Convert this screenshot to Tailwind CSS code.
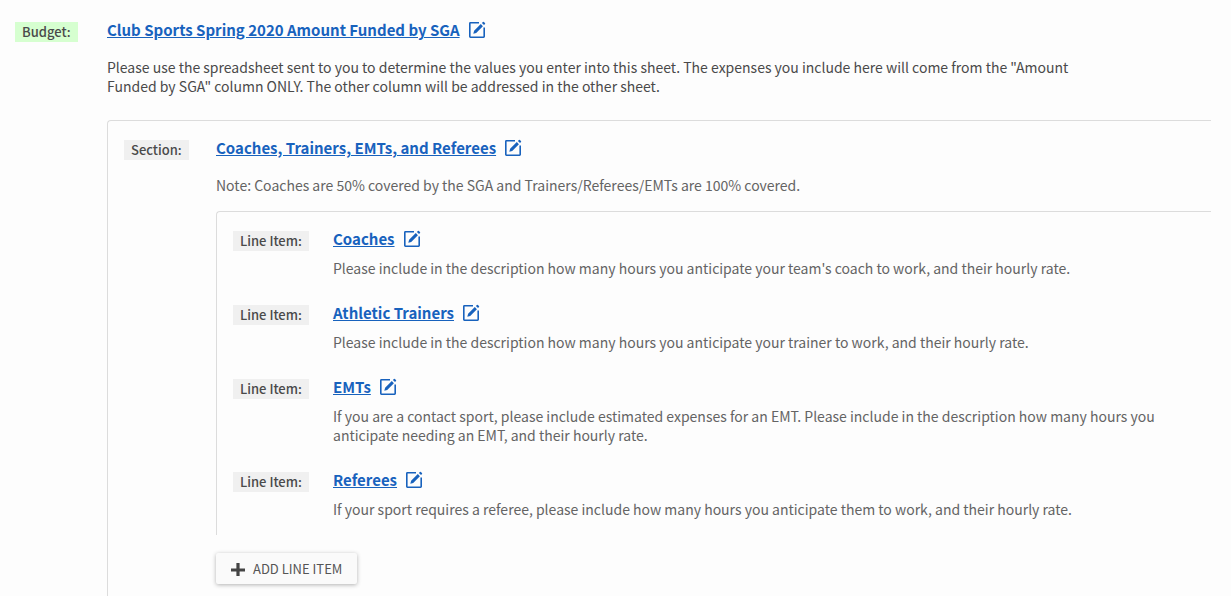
<!DOCTYPE html>
<html lang="en">
<head>
  <meta charset="UTF-8" />
  <meta name="viewport" content="width=device-width, initial-scale=1" />
  <title>Budget</title>
  <script src="https://cdn.jsdelivr.net/npm/@tailwindcss/browser@4"></script>
</head>
<body class="bg-[#fdfdfd] font-['Noto_Sans_CJK_SC','Noto_Sans',sans-serif] text-[14px] leading-[19px] text-[#4a4a4a]">
  <svg class="hidden">
    <symbol id="edit" viewBox="0 0 18 18">
      <path d="M11 1.800H2.400Q1.800 1.800 1.800 2.400v13.200q0 .6.6.6h13.200q.6 0 .6-.6V6.500" fill="none" stroke="currentColor" stroke-width="1.600" />
      <path d="M12.800 3.100l2.100 2.100-6.700 6.700-2.900.8.8-2.900zM13.900 2l1-1q.5-.4 1 0l1.100 1.100q.4.5 0 1l-1 1z" fill="currentColor" />
    </symbol>
  </svg>

  <main class="pt-[19px] pr-5 pl-[15px]">
    <section class="grid grid-cols-[92px_minmax(0,1fr)] items-start">
      <span class="mt-[3px] justify-self-start bg-[#d6ffd0] px-[7px] text-[13px] leading-5 font-medium">Budget:</span>
      <div>
        <h1 class="flex items-center gap-2 text-[15px] leading-[22px] font-bold text-[#1862bd]">
          <a href="#" class="underline">Club Sports Spring 2020 Amount Funded by SGA</a>
          <a href="#" aria-label="Edit budget"><svg class="size-[18px]"><use href="#edit" /></svg></a>
        </h1>
        <p class="mt-[17px] max-w-[1000px]">Please use the spreadsheet sent to you to determine the values you enter into this sheet. The expenses you include here will come from the "Amount Funded by SGA" column ONLY. The other column will be addressed in the other sheet.</p>

        <section class="mt-6 grid grid-cols-[92px_minmax(0,1fr)] items-start rounded-tl-sm border-t border-l border-[#dcdcdc] pt-4 pb-4 pl-4">
          <span class="mt-[3px] justify-self-start bg-[#f0f0f0] px-[7px] text-[13px] leading-5 font-medium">Section:</span>
          <div>
            <h2 class="flex items-center gap-2 text-[15px] leading-[22px] font-bold text-[#1862bd]">
              <a href="#" class="underline">Coaches, Trainers, EMTs, and Referees</a>
              <a href="#" aria-label="Edit section"><svg class="size-[18px]"><use href="#edit" /></svg></a>
            </h2>
            <p class="mt-[17px] text-[#646464]">Note: Coaches are 50% covered by the SGA and Trainers/Referees/EMTs are 100% covered.</p>

            <ul class="mt-4 space-y-6 rounded-tl-sm border-t border-l border-[#dcdcdc] pt-4 pb-4 pl-4">
              <li class="grid grid-cols-[100px_minmax(0,1fr)] items-start">
                <span class="mt-[3px] justify-self-start bg-[#f0f0f0] px-[7px] text-[13px] leading-5 font-medium">Line Item:</span>
                <div>
                  <h3 class="flex items-center gap-2 text-[15px] leading-[22px] font-bold text-[#1862bd]">
                    <a href="#" class="underline">Coaches</a>
                    <a href="#" aria-label="Edit Coaches"><svg class="size-[18px]"><use href="#edit" /></svg></a>
                  </h3>
                  <p class="mt-[9px] text-[#646464]">Please include in the description how many hours you anticipate your team's coach to work, and their hourly rate.</p>
                </div>
              </li>
              <li class="grid grid-cols-[100px_minmax(0,1fr)] items-start">
                <span class="mt-[3px] justify-self-start bg-[#f0f0f0] px-[7px] text-[13px] leading-5 font-medium">Line Item:</span>
                <div>
                  <h3 class="flex items-center gap-2 text-[15px] leading-[22px] font-bold text-[#1862bd]">
                    <a href="#" class="underline">Athletic Trainers</a>
                    <a href="#" aria-label="Edit Athletic Trainers"><svg class="size-[18px]"><use href="#edit" /></svg></a>
                  </h3>
                  <p class="mt-[9px] text-[#646464]">Please include in the description how many hours you anticipate your trainer to work, and their hourly rate.</p>
                </div>
              </li>
              <li class="grid grid-cols-[100px_minmax(0,1fr)] items-start">
                <span class="mt-[3px] justify-self-start bg-[#f0f0f0] px-[7px] text-[13px] leading-5 font-medium">Line Item:</span>
                <div>
                  <h3 class="flex items-center gap-2 text-[15px] leading-[22px] font-bold text-[#1862bd]">
                    <a href="#" class="underline">EMTs</a>
                    <a href="#" aria-label="Edit EMTs"><svg class="size-[18px]"><use href="#edit" /></svg></a>
                  </h3>
                  <p class="mt-[9px] text-[#646464]">If you are a contact sport, please include estimated expenses for an EMT. Please include in the description how many hours you anticipate needing an EMT, and their hourly rate.</p>
                </div>
              </li>
              <li class="grid grid-cols-[100px_minmax(0,1fr)] items-start">
                <span class="mt-[3px] justify-self-start bg-[#f0f0f0] px-[7px] text-[13px] leading-5 font-medium">Line Item:</span>
                <div>
                  <h3 class="flex items-center gap-2 text-[15px] leading-[22px] font-bold text-[#1862bd]">
                    <a href="#" class="underline">Referees</a>
                    <a href="#" aria-label="Edit Referees"><svg class="size-[18px]"><use href="#edit" /></svg></a>
                  </h3>
                  <p class="mt-[9px] text-[#646464]">If your sport requires a referee, please include how many hours you anticipate them to work, and their hourly rate.</p>
                </div>
              </li>
            </ul>

            <button type="button" class="mt-[18px] flex h-[31px] items-center gap-2 rounded-xs bg-[#fafafa] px-[15px] text-[13px] font-normal text-[#555] shadow-[0_1px_4px_rgba(0,0,0,0.3)] hover:bg-gray-100">
              <svg class="size-[14px]" viewBox="0 0 14 14"><path d="M5.400 1h3.200v5.400H14v3.200H8.600V14H5.400V9.600H0V6.400h5.400z" fill="#444" /></svg>
              ADD LINE ITEM
            </button>
          </div>
        </section>
      </div>
    </section>
  </main>
</body>
</html>
